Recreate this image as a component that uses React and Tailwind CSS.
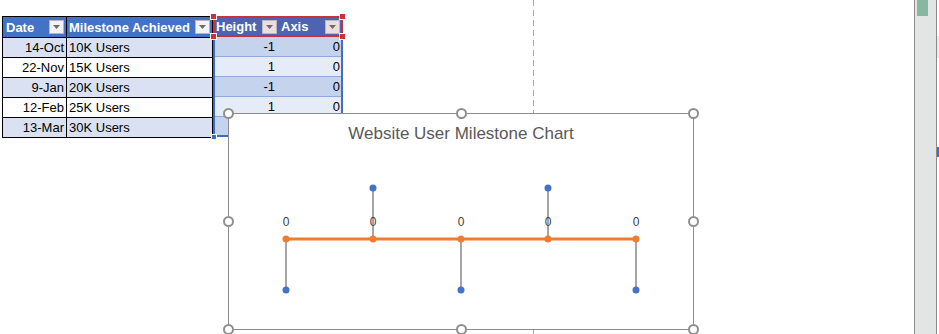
import React from 'react';

const rows = [
  { date: '14-Oct', label: '10K Users', height: '-1', axis: '0' },
  { date: '22-Nov', label: '15K Users', height: '1', axis: '0' },
  { date: '9-Jan', label: '20K Users', height: '-1', axis: '0' },
  { date: '12-Feb', label: '25K Users', height: '1', axis: '0' },
  { date: '13-Mar', label: '30K Users', height: '', axis: '' },
];

const points = [
  { x: 57, dir: 1 },
  { x: 144, dir: -1 },
  { x: 232, dir: 1 },
  { x: 319, dir: -1 },
  { x: 407, dir: 1 },
];

function FilterButton({ tinted }) {
  return (
    <span
      className={`flex h-[14px] w-[15px] shrink-0 items-center justify-center border border-[#b8b8b8] ${
        tinted ? 'bg-[#ecdede]' : 'bg-[#f2f2f2]'
      }`}
    >
      <svg width="7" height="4" viewBox="0 0 7 4">
        <path d="M0 0 L7 0 L3.5 4 Z" fill="#6b6b6b" />
      </svg>
    </span>
  );
}

function Handle({ className }) {
  return (
    <span
      className={`absolute h-[11px] w-[11px] rounded-full border-2 border-[#8f8f8f] bg-white ${className}`}
    />
  );
}

function Corner({ className }) {
  return <span className={`absolute h-[7px] w-[7px] border border-white bg-[#c8323a] ${className}`} />;
}

function Chart() {
  return (
    <div className="absolute left-[228px] top-[113px] h-[217px] w-[466px] border border-[#8c8c8c] bg-white">
      <div className="pt-[9px] text-center text-[17px] leading-[22px] text-[#595959]">
        Website User Milestone Chart
      </div>
      <svg className="absolute left-0 top-0" width="466" height="217" viewBox="0 0 466 217">
        {points.map((p) => (
          <line
            key={'v' + p.x}
            x1={p.x}
            y1={125}
            x2={p.x}
            y2={p.dir > 0 ? 176 : 74}
            stroke="#4d4d4d"
            strokeWidth="1"
          />
        ))}
        <line x1={57} y1={125} x2={407} y2={125} stroke="#ed7d31" strokeWidth="3" />
        {points.map((p) => (
          <g key={'d' + p.x}>
            <circle cx={p.x} cy={125} r="3.5" fill="#ed7d31" />
            <circle cx={p.x} cy={p.dir > 0 ? 176 : 74} r="3.5" fill="#4472c4" />
            <text
              x={p.x}
              y={112}
              textAnchor="middle"
              fontSize="12"
              fill="#404040"
              fontFamily="Liberation Sans, sans-serif"
            >
              0
            </text>
          </g>
        ))}
      </svg>
      <Handle className="-left-[6px] -top-[6px]" />
      <Handle className="left-[227px] -top-[6px]" />
      <Handle className="-right-[6px] -top-[6px]" />
      <Handle className="-left-[6px] top-[102px]" />
      <Handle className="-right-[6px] top-[102px]" />
      <Handle className="-left-[6px] -bottom-[6px]" />
      <Handle className="left-[227px] -bottom-[6px]" />
      <Handle className="-right-[6px] -bottom-[6px]" />
    </div>
  );
}

function Table() {
  return (
    <div className="ml-[2px] mt-[16px] flex text-[13px] leading-[19px]">
      {/* Date + Milestone */}
      <div className="flex flex-col border-l border-t border-black">
        <div className="flex h-[21px] font-bold text-white">
          <div className="flex w-[64px] items-center justify-between border-b border-r border-black bg-[#4472c4] pl-[3px] pr-[2px]">
            <span>Date</span>
            <FilterButton />
          </div>
          <div className="flex w-[146px] items-center justify-between border-b border-r border-black bg-[#4472c4] pl-[2px] pr-[2px]">
            <span>Milestone Achieved</span>
            <FilterButton />
          </div>
        </div>
        {rows.map((r, i) => (
          <div key={r.date} className={`flex h-[20px] ${i % 2 === 0 ? 'bg-[#d9e1f2]' : 'bg-white'}`}>
            <div className="w-[64px] border-b border-r border-black pr-[2px] text-right">{r.date}</div>
            <div className="w-[146px] border-b border-r border-black pl-[2px]">{r.label}</div>
          </div>
        ))}
      </div>

      {/* Height + Axis (selected) */}
      <div className="relative flex w-[130px] flex-col">
        <div className="flex h-[21px] items-center border-2 border-[#c8323a] bg-[#4d65b0] font-bold text-white">
          <div className="flex w-[63px] items-center justify-between pl-[1px] pr-[1px]">
            <span>Height</span>
            <FilterButton tinted />
          </div>
          <div className="flex flex-1 items-center justify-between pl-[3px] pr-[1px]">
            <span>Axis</span>
            <FilterButton tinted />
          </div>
        </div>
        <div className="flex flex-col border-x-2 border-b-2 border-[#3c6fc4]">
          {rows.map((r, i) => (
            <div
              key={r.date}
              className={`flex h-[20px] border-b border-[#8ea9db] last:h-[18px] last:border-b-0 ${
                i % 2 === 0 ? 'bg-[#c5d3ec]' : 'bg-[#e6ecf7]'
              }`}
            >
              <div className="w-[63px] pr-[3px] text-right">{r.height}</div>
              <div className="flex-1 pr-[1px] text-right">{r.axis}</div>
            </div>
          ))}
        </div>
        <Corner className="-left-[3px] -top-[3px]" />
        <Corner className="-right-[3px] -top-[3px]" />
        <Corner className="-left-[3px] top-[17px]" />
        <Corner className="-right-[3px] top-[17px]" />
        <span className="absolute -bottom-[2px] -left-[2px] h-[6px] w-[6px] border border-white bg-[#3c6fc4]" />
      </div>
    </div>
  );
}

export default function App() {
  return (
    <div
      className="flex h-[334px] w-[939px] overflow-hidden bg-white"
      style={{ fontFamily: '"Liberation Sans", Arial, sans-serif' }}
    >
      <div className="relative w-[914px] shrink-0">
        <span className="absolute left-[533px] top-0 h-[334px] w-px bg-[repeating-linear-gradient(to_bottom,#a6a6a6_0_6px,transparent_6px_10px)]" />
        <Table />
        <Chart />
      </div>
      <div className="flex w-[23px] shrink-0 flex-col border-x border-[#8a8a8a] bg-[#e3e5e4] px-[2px]">
        <div className="h-[16px] w-[11px] bg-[#86b8a0]" />
      </div>
      <div className="flex w-[2px] shrink-0 flex-col pt-[36px]">
        <div className="h-[22px] bg-[#ececec]" />
        <div className="mt-[89px] h-[10px] bg-[#3c6fc4]" />
      </div>
    </div>
  );
}
